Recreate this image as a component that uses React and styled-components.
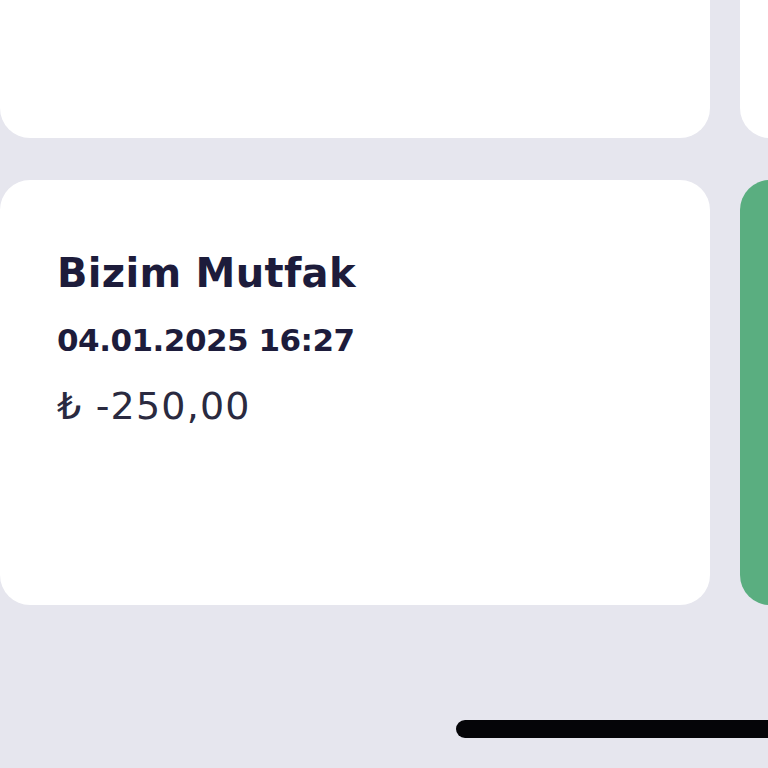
import React from 'react';
import styled, { createGlobalStyle } from 'styled-components';

const GlobalStyle = createGlobalStyle`
  html, body {
    margin: 0;
    padding: 0;
    background: #e6e6ee;
  }
  body {
    font-family: "DejaVu Sans", "Noto Sans", sans-serif;
  }
`;

const Screen = styled.div`
  width: 768px;
  height: 768px;
  overflow: hidden;
  background: #e6e6ee;
`;

const Grid = styled.div`
  display: grid;
  grid-template-columns: 710px 710px;
  grid-template-rows: 136px 425px;
  column-gap: 30px;
  row-gap: 44px;
`;

const Card = styled.div`
  background: ${p => (p.$accent ? '#5aae80' : '#ffffff')};
  border-radius: ${p => (p.$clipped ? '0 0 30px 30px' : '30px')};
  padding: 69px 57px;
  box-sizing: border-box;
`;

const Title = styled.div`
  font-size: 40px;
  font-weight: 700;
  color: #1d1c3b;
  line-height: 1.2;
  letter-spacing: 0.3px;
`;

const DateText = styled.div`
  margin-top: 25px;
  font-size: 31px;
  font-weight: 700;
  color: #1d1c3b;
  line-height: 1.2;
  letter-spacing: -0.5px;
`;

const Amount = styled.div`
  margin-top: 25px;
  font-size: 38px;
  font-weight: 400;
  color: #2a2a40;
  line-height: 1.2;
  letter-spacing: 1.2px;
`;

const BarRow = styled.div`
  display: flex;
  padding-left: 456px;
  margin-top: 115px;
`;

const HomeBar = styled.div`
  flex: none;
  width: 400px;
  height: 18px;
  border-radius: 9px;
  background: #050508;
`;

export default function App() {
  return (
    <Screen>
      <GlobalStyle />
      <Grid>
        <Card $clipped />
        <Card $clipped />
        <Card>
          <Title>Bizim Mutfak</Title>
          <DateText>04.01.2025 16:27</DateText>
          <Amount>₺ -250,00</Amount>
        </Card>
        <Card $accent />
      </Grid>
      <BarRow>
        <HomeBar />
      </BarRow>
    </Screen>
  );
}
